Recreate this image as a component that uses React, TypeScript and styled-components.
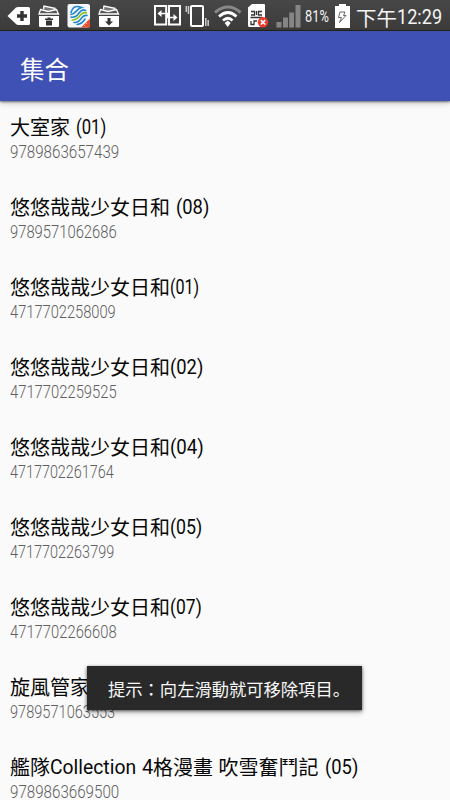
import React, { useLayoutEffect, useRef, useState } from 'react';
import styled, { createGlobalStyle } from 'styled-components';

const GlobalStyle = createGlobalStyle`
  * { box-sizing: border-box; }
  html, body { margin: 0; padding: 0; overflow: hidden; background: #fafafa; }
  body { font-family: "Noto Sans CJK TC", sans-serif; }
`;

const Screen = styled.div`
  position: relative;
  display: flex;
  flex-direction: column;
  width: 450px;
  height: 800px;
  overflow: hidden;
  background: #fafafa;
`;

const StatusBar = styled.header`
  display: flex;
  justify-content: space-between;
  flex: none;
  height: 31px;
  padding: 0 8px 0 7px;
  color: #f4f4f4;
  background: linear-gradient(#474747, #3b3b3b);
  border-bottom: 1px solid #26250f;
`;

const IconGroup = styled.div<{ $gap?: number }>`
  display: flex;
  align-items: flex-start;
  gap: ${(p) => p.$gap ?? 0}px;
`;

const Glyph = styled.svg<{ $before?: number }>`
  display: block;
  flex: none;
  margin-left: ${(p) => p.$before ?? 0}px;
`;

const StatusText = styled.span<{ $size: number; $before: number; $line: number }>`
  display: flex;
  flex: none;
  height: 31px;
  margin-left: ${(p) => p.$before}px;
  font-size: ${(p) => p.$size}px;
  line-height: ${(p) => p.$line}px;
  white-space: nowrap;
`;

const Toolbar = styled.div`
  z-index: 1;
  display: flex;
  align-items: center;
  flex: none;
  height: 70px;
  padding: 5px 20px 0;
  background: #3f51b5;
  box-shadow: 0 1px 2px rgba(0, 0, 0, 0.5), 0 3px 6px rgba(0, 0, 0, 0.16);
`;

const ToolbarTitle = styled.h1`
  margin: 0;
  color: #fff;
  font-size: 24.5px;
  font-weight: 400;
  line-height: 36px;
`;

const List = styled.ul`
  margin: 0;
  padding: 0;
  list-style: none;
`;

const Item = styled.li`
  height: 80px;
  padding: 11px 10px 0;
`;

const ItemTitle = styled.div`
  display: flex;
  height: 30px;
  color: #080808;
  font-size: 20px;
  line-height: 30px;
  white-space: nowrap;
`;

const ItemCode = styled.div`
  display: flex;
  height: 18px;
  color: #606060;
  font-size: 17.8px;
  line-height: 20px;
`;

const FitBox = styled.span<{ $width: number; $before: number; $weight: number }>`
  display: block;
  flex: none;
  width: ${(p) => p.$width}px;
  margin-left: ${(p) => p.$before}px;
  font-family: Roboto, "Noto Sans CJK TC", sans-serif;
  font-weight: ${(p) => p.$weight};
  white-space: pre;
`;

const FitInner = styled.span`
  display: inline-block;
  transform-origin: 0 50%;
`;

const Toast = styled.div`
  position: absolute;
  z-index: 2;
  left: 87px;
  top: 666px;
  display: flex;
  align-items: center;
  width: 275px;
  height: 44px;
  padding: 1px 0 0 21px;
  color: #f7f7f7;
  background: #292929;
  box-shadow: 0 1px 3px rgba(0, 0, 0, 0.6), 0 3px 6px rgba(0, 0, 0, 0.2);
  font-size: 17.3px;
  line-height: 26px;
  white-space: nowrap;
`;

const FullStop = styled.span`
  font-family: "Noto Sans CJK JP", sans-serif;
`;

/** Condenses a run of latin text so that it takes exactly the given width. */
function Fit({ width, before = 0, weight = 400, children }: {
  width: number; before?: number; weight?: number; children: string;
}) {
  const ref = useRef<HTMLSpanElement>(null);
  const [scale, setScale] = useState(1);
  useLayoutEffect(() => {
    if (ref.current) setScale(width / ref.current.offsetWidth);
  }, [width, children]);
  return (
    <FitBox $width={width} $before={before} $weight={weight}>
      <FitInner ref={ref} style={{ transform: `scaleX(${scale})` }}>{children}</FitInner>
    </FitBox>
  );
}

type Run = string | { text: string; width: number; before?: number };
type Book = { title: Run[]; code: string; codeWidth: number };

const series = '悠悠哉哉少女日和';

const books: Book[] = [
  { title: ['大室家', { text: '(01)', width: 30, before: 6 }], code: '9789863657439', codeWidth: 109 },
  { title: [series, { text: '(08)', width: 33, before: 6 }], code: '9789571062686', codeWidth: 106.5 },
  { title: [series, { text: '(01)', width: 29 }], code: '4717702258009', codeWidth: 105.5 },
  { title: [series, { text: '(02)', width: 33 }], code: '4717702259525', codeWidth: 106.5 },
  { title: [series, { text: '(04)', width: 33.5 }], code: '4717702261764', codeWidth: 103.5 },
  { title: [series, { text: '(05)', width: 32 }], code: '4717702263799', codeWidth: 104 },
  { title: [series, { text: '(07)', width: 31.5 }], code: '4717702266608', codeWidth: 106.5 },
  { title: ['旋風管家'], code: '9789571063553', codeWidth: 105 },
  {
    title: [
      '艦隊',
      { text: 'Collection', width: 86 },
      { text: '4', width: 11, before: 6 },
      '格漫畫',
      { text: ' ', width: 5.5 },
      '吹雪奮鬥記',
      { text: '(05)', width: 33, before: 6 },
    ],
    code: '9789863669500',
    codeWidth: 109,
  },
];

const BackTag = () => (
  <Glyph width="24" height="31" viewBox="0 0 24 31">
    <path d="M.5 16 9 7.500Q10 7 11 7H21.500Q23 7 23 8.500V23.500Q23 25 21.500 25H11Q10 25 9 24Z" fill="#fff" />
    <path d="M15 11v10M10 16h10" stroke="#333" strokeWidth="3.400" />
  </Glyph>
);

const OpenBox = ({ trash = false }: { trash?: boolean }) => (
  <Glyph width="22" height="31" viewBox="0 0 22 31">
    <path d="M5 14V6L17 8.500V14Z" fill="#777" />
    <path d="M5.500 9 6 6 17 8.300V14" fill="none" stroke="#fff" strokeWidth="1.300" />
    <path d="M2.500 9.500 10 11.500 18.500 9.500 20.500 14H1Z" fill="#555" stroke="#fff" strokeWidth="1.300" />
    <path d="M1 16H21V26Q21 27 20 27H2Q1 27 1 26Z" fill="#fff" />
    {trash ? (
      <path d="M7 18.500h2.500v-1h3v1H15V20H7ZM8 20.500h6v5H8Z" fill="#333" />
    ) : (
      <path d="M9.500 18h3v3.500H15l-4 4-4-4h2.500Z" fill="#333" />
    )}
  </Glyph>
);

const CarrierLogo = () => (
  <Glyph width="24" height="31" viewBox="0 0 24 31">
    <rect x=".5" y="4" width="22.500" height="23.500" rx="2" fill="#f5f8fb" />
    <g fill="none" strokeWidth="1.600" strokeLinecap="round">
      <path d="M4 12.500C6 6 10 5.500 14.500 7.500C10 8 9 14 4 14.500" stroke="#2487c8" />
      <path d="M4 17C8 18 10 16 12 13S16 9 18.500 10.500" stroke="#2487c8" />
      <path d="M5 20C10 20 11 18 13 15.500S17 12 19.500 13" stroke="#8fc31f" />
      <path d="M7 22.500C12 23 13 20 15 17.500S18 15 20 15.500" stroke="#2487c8" />
      <path d="M10 24.500Q15 24 18 19" stroke="#2487c8" />
    </g>
    <path d="M14 27.500 23 18.500V26Q23 27.500 21.500 27.500Z" fill="#e8502e" />
    <path d="m17 25 1 1m1-3 1 1" stroke="#fbc0a8" strokeWidth="1" />
  </Glyph>
);

const DataSwap = () => (
  <Glyph width="29" height="31" viewBox="0 0 29 31">
    <path d="M2 6H13.200V24.500H2ZM16 6H27V24.500H16Z" fill="none" stroke="#fff" strokeWidth="2" />
    <path d="M7 13.500H14.500V17.500H22" fill="none" stroke="#fff" strokeWidth="1.700" />
    <path d="m4.500 13.500 4-3.500v7ZM24.500 17.500l-4-3.500v7Z" fill="#fff" />
  </Glyph>
);

const Vibrate = () => (
  <Glyph $before={3} width="26" height="31" viewBox="0 0 26 31">
    <rect x="6" y="6" width="12" height="20" rx="1" fill="none" stroke="#fff" strokeWidth="2" />
    <path d="M3.500 6V14M1.300 6V12M20.800 18V26M23.200 20V26" stroke="#ccc" strokeWidth="1.500" />
  </Glyph>
);

const Wifi = () => (
  <Glyph $before={3} width="28" height="31" viewBox="0 0 28 31">
    <path d="M1 12.500Q14 1.500 26.500 12.500" fill="none" stroke="#888" strokeWidth="3" />
    <path d="M5 16.500Q14 8.500 22.500 16.500M9 20.500Q14 16 18.500 20.500" fill="none" stroke="#fff" strokeWidth="2.700" />
    <path d="m13.700 27-3-4 3-2.500 3 2.500Z" fill="#fff" />
  </Glyph>
);

const SimCard = () => (
  <Glyph $before={5} width="23" height="31" viewBox="0 0 23 31">
    <path d="M1 7.500V25.500Q1 27 2.500 27H16.500Q18 27 18 25.500V5Q18 4 17 4H5Z" fill="#fff" />
    <path d="M4 11.500h3.500V15H4m11-3.500h-3.500V15H15M9.500 11v4M3.500 17.500h12M4 21v3.500h3V21h3" fill="none" stroke="#333" strokeWidth="1.300" />
    <circle cx="16" cy="22.300" r="5.200" fill="#eb3b32" />
    <path d="m13.800 20.100 4.400 4.400m0-4.400-4.400 4.400" stroke="#fff" strokeWidth="1.600" />
  </Glyph>
);

const Signal = () => (
  <Glyph $before={6} width="25" height="31" viewBox="0 0 25 31">
    <path d="M.5 22H5.500V27.500H.5ZM7 17.500H12V27.500H7ZM13.200 12.500H18V27.500H13.200ZM19.500 5H24.500V27.500H19.500Z" fill="#858585" />
  </Glyph>
);

const Battery = () => (
  <Glyph $before={5} width="16" height="31" viewBox="0 0 16 31">
    <path d="M5 6V4H12V6H16V28H1V6Z" fill="#fff" />
    <path d="M6 12H11L9.500 15.500H12L5.500 22.500 7.500 17.500H4.500Z" fill="none" stroke="#666" strokeWidth="1" />
  </Glyph>
);

export default function App() {
  return (
    <>
      <GlobalStyle />
      <Screen>
        <StatusBar>
          <IconGroup $gap={7}>
            <BackTag />
            <OpenBox trash />
            <CarrierLogo />
            <OpenBox />
          </IconGroup>
          <IconGroup>
            <DataSwap />
            <Vibrate />
            <Wifi />
            <SimCard />
            <Signal />
            <StatusText $size={16} $before={4} $line={33}><Fit width={24}>81%</Fit></StatusText>
            <Battery />
            <StatusText $size={20.5} $before={6} $line={34}>
              下午
              <Fit width={45}>12:29</Fit>
            </StatusText>
          </IconGroup>
        </StatusBar>
        <Toolbar><ToolbarTitle>集合</ToolbarTitle></Toolbar>
        <List>
          {books.map((book) => (
            <Item key={book.code}>
              <ItemTitle>
                {book.title.map((run, i) =>
                  typeof run === 'string' ? (
                    <span key={i}>{run}</span>
                  ) : (
                    <Fit key={i} width={run.width} before={run.before}>{run.text}</Fit>
                  ),
                )}
              </ItemTitle>
              <ItemCode><Fit width={book.codeWidth} weight={300}>{book.code}</Fit></ItemCode>
            </Item>
          ))}
        </List>
        <Toast>提示：向左滑動就可移除項目<FullStop lang="ja">。</FullStop></Toast>
      </Screen>
    </>
  );
}
